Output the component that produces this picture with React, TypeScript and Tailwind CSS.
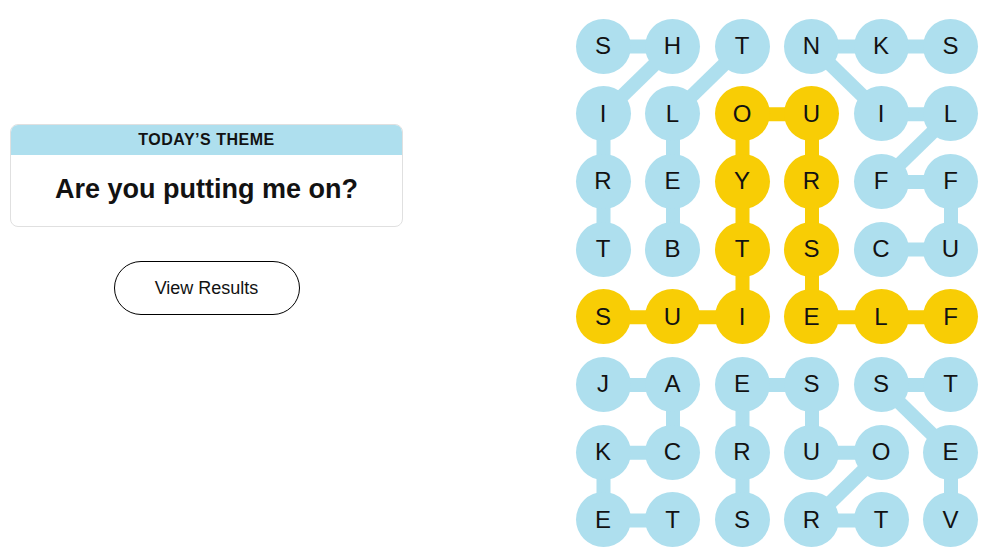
import React from 'react';

type Cell = { letter: string; found: boolean };

const BLUE = '#aedfee';
const YELLOW = '#f8cd05';

// 8 rows x 6 cols, letters read off the board
const rows = ['SHTNKS', 'ILOUIL', 'REYRFF', 'TBTSCU', 'SUIELF', 'JAESST', 'KCRUOE', 'ETSRTV'];
const spangram = new Set(['1-2', '1-3', '2-2', '2-3', '3-2', '3-3', '4-0', '4-1', '4-2', '4-3', '4-4', '4-5']);

const board: Cell[][] = rows.map((row, r) =>
  row.split('').map((letter, c) => ({ letter, found: spangram.has(`${r}-${c}`) }))
);

// links between cells: [r1, c1, r2, c2]
const blueLinks: number[][] = [
  // SHIRT
  [0, 0, 0, 1], [0, 1, 1, 0], [1, 0, 2, 0], [2, 0, 3, 0],
  // BELT
  [0, 2, 1, 1], [1, 1, 2, 1], [2, 1, 3, 1],
  // CUFFLINKS
  [3, 4, 3, 5], [3, 5, 2, 5], [2, 5, 2, 4], [2, 4, 1, 5], [1, 5, 1, 4], [1, 4, 0, 3], [0, 3, 0, 4], [0, 4, 0, 5],
  // JACKET
  [5, 0, 5, 1], [5, 1, 6, 1], [6, 1, 6, 0], [6, 0, 7, 0], [7, 0, 7, 1],
  // TROUSERS
  [7, 4, 7, 3], [7, 3, 6, 4], [6, 4, 6, 3], [6, 3, 5, 3], [5, 3, 5, 2], [5, 2, 6, 2], [6, 2, 7, 2],
  // VEST
  [7, 5, 6, 5], [6, 5, 5, 4], [5, 4, 5, 5],
];

const yellowLinks: number[][] = [
  [4, 0, 4, 1], [4, 1, 4, 2], [4, 2, 3, 2], [3, 2, 2, 2], [2, 2, 1, 2], [1, 2, 1, 3],
  [1, 3, 2, 3], [2, 3, 3, 3], [3, 3, 4, 3], [4, 3, 4, 4], [4, 4, 4, 5],
];

const SIZE = 55;
const COL_STEP = 69.5;
const ROW_STEP = 67.7;
const cx = (c: number) => SIZE / 2 + c * COL_STEP;
const cy = (r: number) => SIZE / 2 + r * ROW_STEP;

const Board: React.FC = () => (
  <div className="relative">
    <svg className="absolute inset-0" width={SIZE + 5 * COL_STEP} height={SIZE + 7 * ROW_STEP}>
      {blueLinks.map(([r1, c1, r2, c2], i) => (
        <line key={`b${i}`} x1={cx(c1)} y1={cy(r1)} x2={cx(c2)} y2={cy(r2)} stroke={BLUE} strokeWidth={14} />
      ))}
      {yellowLinks.map(([r1, c1, r2, c2], i) => (
        <line key={`y${i}`} x1={cx(c1)} y1={cy(r1)} x2={cx(c2)} y2={cy(r2)} stroke={YELLOW} strokeWidth={14} />
      ))}
    </svg>
    <div className="relative grid grid-cols-[repeat(6,55px)] grid-rows-[repeat(8,55px)] gap-x-[14.5px] gap-y-[12.7px]">
      {board.flat().map((cell, i) => (
        <div
          key={i}
          className={`flex items-center justify-center rounded-full text-[24px] text-[#121212] ${
            cell.found ? 'bg-[#f8cd05]' : 'bg-[#aedfee]'
          }`}
        >
          {cell.letter}
        </div>
      ))}
    </div>
  </div>
);

const App: React.FC = () => {
  return (
    <div className="flex h-[558px] w-[991px] overflow-hidden bg-white font-['Liberation_Sans',Arial,sans-serif] text-[#121212]">
      {/* Theme + results */}
      <div className="flex w-[413px] shrink-0 flex-col items-center px-[10px] pt-[124px]">
        <div className="w-full overflow-hidden rounded-lg border border-[#e0e0e0]">
          <div className="flex h-[30px] items-center justify-center bg-[#aedfee] text-[16px] font-bold uppercase tracking-[0.5px]">
            Today’s Theme
          </div>
          <div className="flex h-[71px] items-center justify-center pb-[2px] text-[27px] font-extrabold">
            Are you putting me on?
          </div>
        </div>
        <button className="mt-[34px] h-[54px] w-[186px] rounded-full border border-black text-[18px]">
          View Results
        </button>
      </div>

      {/* Board */}
      <div className="pl-[162.5px] pt-[18.5px]">
        <Board />
      </div>
    </div>
  );
};

export default App;
